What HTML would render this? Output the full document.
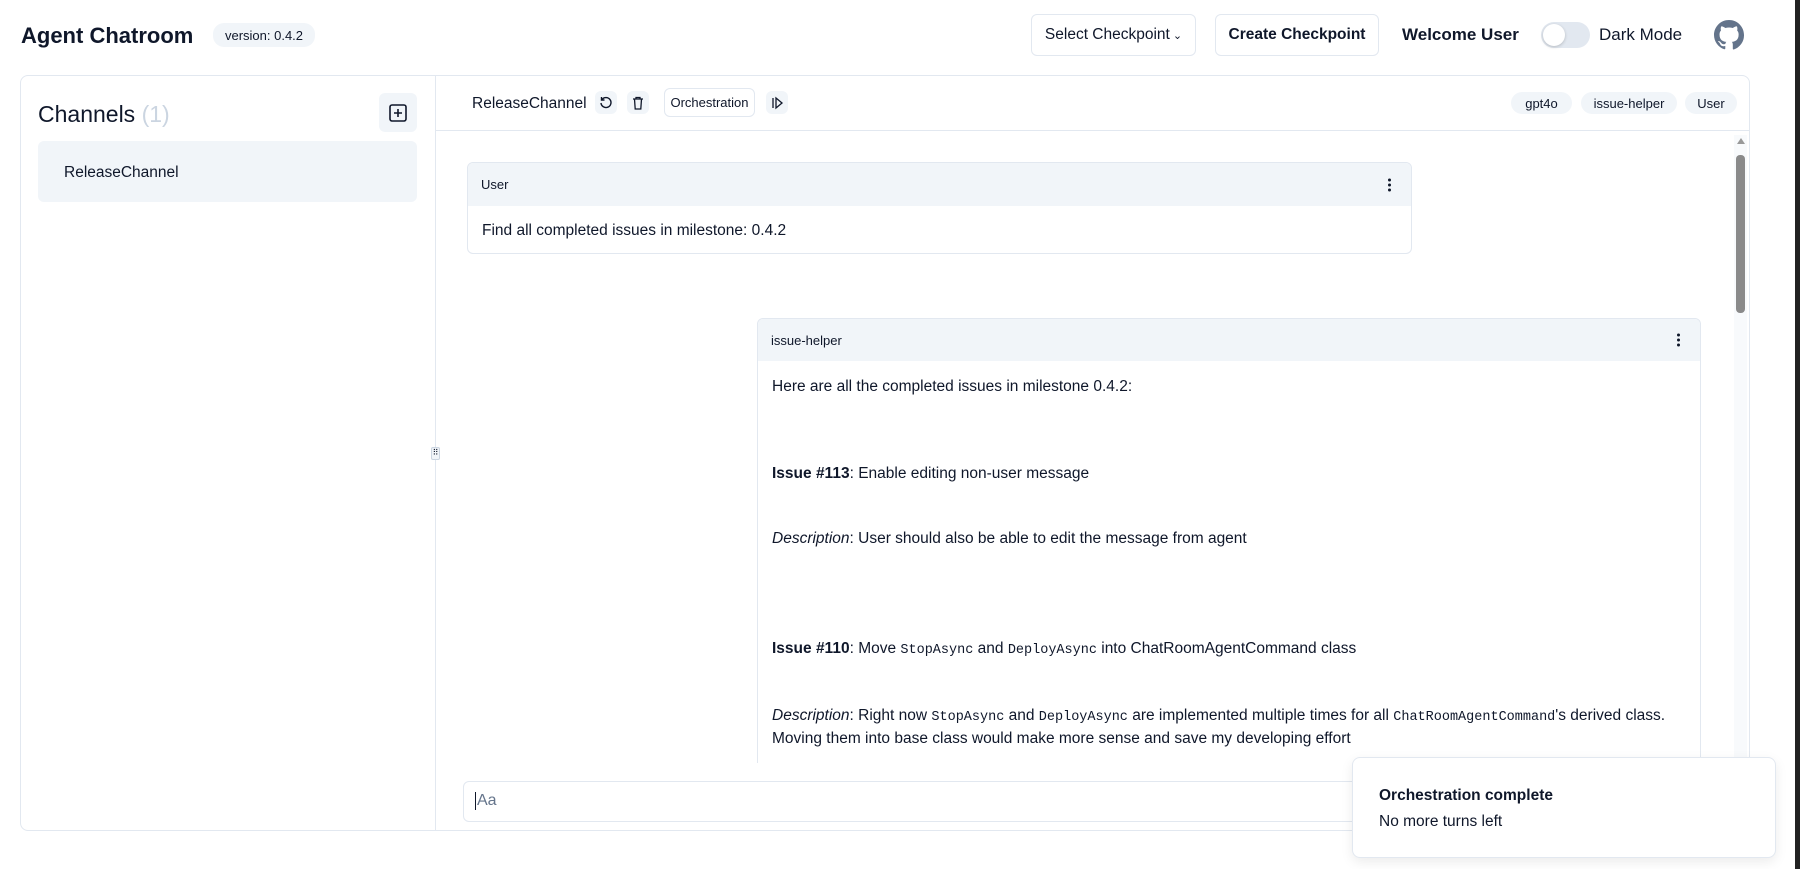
<!DOCTYPE html>
<html><head><meta charset="utf-8"><style>
*{box-sizing:border-box;margin:0;padding:0}
body{width:1800px;height:869px;background:#fff;font-family:"Liberation Sans",sans-serif;color:#0f172a;position:relative;overflow:hidden}
.a{position:absolute}
.btn{position:absolute;border:1px solid #e2e8f0;border-radius:6px;background:#fff;display:flex;align-items:center;justify-content:center;font-size:16px}
.badge{position:absolute;background:#f1f5f9;border-radius:11px;font-size:13px;display:flex;align-items:center;justify-content:center}
.ib{position:absolute;background:#f1f5f9;border-radius:6px;display:flex;align-items:center;justify-content:center}
.card{position:absolute;border:1px solid #e2e8f0;border-radius:6px;background:#fff;overflow:hidden}
.ch{background:#f1f5f9;font-size:13px;display:flex;align-items:center;padding-left:13px;position:relative}
.dots{position:absolute;right:20px;top:50%;transform:translateY(-50%);width:3px}
.dots i{display:block;width:3px;height:3px;background:#0f172a;border-radius:50%;margin:2px 0}
.t{position:absolute;left:14px;font-size:15.5px;white-space:nowrap}
code{font-family:"Liberation Mono",monospace;font-size:13.5px}
</style></head><body>
<div class="a" style="left:21px;top:23px;font-size:22px;font-weight:bold">Agent Chatroom</div>
<div class="badge" style="left:213px;top:23px;width:102px;height:24px;font-size:13px">version: 0.4.2</div>
<div class="btn" style="left:1031px;top:14px;width:165px;height:42px;font-size:15.5px">Select Checkpoint <span style="font-size:11px;margin-left:3px">&#8964;</span></div>
<div class="btn" style="left:1215px;top:14px;width:164px;height:42px;font-weight:600;font-size:15.5px">Create Checkpoint</div>
<div class="a" style="left:1402px;top:25px;font-size:17px;font-weight:bold">Welcome User</div>
<div class="a" style="left:1541px;top:22px;width:49px;height:26px;border-radius:13px;background:#e2e8f0"><div style="position:absolute;left:2px;top:2px;width:22px;height:22px;border-radius:50%;background:#fff;box-shadow:0 1px 3px rgba(0,0,0,.2)"></div></div>
<div class="a" style="left:1599px;top:25px;font-size:17px">Dark Mode</div>
<svg class="a" style="left:1714px;top:20px" width="30" height="30" viewBox="0 0 16 16"><path fill="#64748b" d="M8 0C3.58 0 0 3.58 0 8c0 3.54 2.29 6.530 5.47 7.59.4.07.55-.17.55-.38v-1.34C3.8 14.36 3.35 12.9 3.35 12.9c-.36-.92-.89-1.17-.89-1.17-.73-.5.05-.49.05-.49.8.06 1.23.83 1.230.83.71 1.22 1.87.87 2.33.66.07-.52.28-.87.51-1.07-1.78-.2-3.640-.89-3.64-3.95 0-.87.31-1.59.82-2.15-.08-.2-.36-1.02.08-2.12 0 0 .67-.21 2.2.82.64-.18 1.32-.27 2-.27.68 0 1.36.09 2 .27 1.53-1.04 2.2-.82 2.2-.82.44 1.1.16 1.92.08 2.12.51.56.82 1.27.82 2.15 0 3.07-1.87 3.75-3.65 3.95.29.25.54.73.54 1.48v2.2c0 .21.15.46.55.38A8.013 8.013 0 0016 8c0-4.42-3.58-8-8-8z"/></svg>
<div class="a" style="left:1795px;top:0;width:5px;height:869px;background:#222"></div>

<div class="a" style="left:20px;top:75px;width:1730px;height:756px;border:1px solid #e2e8f0;border-radius:8px"></div>
<div class="a" style="left:435px;top:76px;width:1px;height:754px;background:#e2e8f0"></div>
<div class="a" style="left:431px;top:447px;width:9px;height:13px;background:#f1f5f9;border:1px solid #cbd5e1;border-radius:2px;font-size:8px;line-height:10px;text-align:center">⠿</div>
<div class="a" style="left:38px;top:101px;font-size:23px">Channels <span style="color:#cbd5e1">(1)</span></div>
<div class="ib" style="left:379px;top:93px;width:38px;height:39px"><svg width="20" height="20" viewBox="0 0 20 20" fill="none" stroke="#0f172a" stroke-width="1.6"><rect x="2" y="2" width="16" height="16" rx="2"/><path d="M10 6v8M6 10h8"/></svg></div>
<div class="a" style="left:38px;top:141px;width:379px;height:61px;background:#f1f5f9;border-radius:6px"></div>
<div class="a" style="left:64px;top:164px;font-size:15.5px">ReleaseChannel</div>

<div class="a" style="left:436px;top:130px;width:1313px;height:1px;background:#e2e8f0"></div>
<div class="a" style="left:472px;top:95px;font-size:15.5px">ReleaseChannel</div>
<div class="ib" style="left:595px;top:91px;width:22px;height:23px"><svg width="14" height="14" viewBox="0 0 14 14" fill="none" stroke="#0f172a" stroke-width="1.4"><path d="M3 3.5A5 5 0 1 1 2 7"/><path d="M2.5 1v3h3"/></svg></div>
<div class="ib" style="left:627px;top:91px;width:22px;height:23px"><svg width="14" height="14" viewBox="0 0 14 14" fill="none" stroke="#0f172a" stroke-width="1.3"><path d="M2 3h10M5 3V1.5h4V3M3.5 3l.7 10h5.6l.7-10"/></svg></div>
<div class="btn" style="left:664px;top:88px;width:91px;height:29px;font-size:13px">Orchestration</div>
<div class="ib" style="left:766px;top:91px;width:22px;height:23px"><svg width="14" height="14" viewBox="0 0 14 14" fill="none" stroke="#0f172a" stroke-width="1.3"><path d="M3 2v10M6 2l6 5-6 5z"/></svg></div>
<div class="badge" style="left:1511px;top:92px;width:61px;height:22px">gpt4o</div>
<div class="badge" style="left:1581px;top:92px;width:96px;height:22px">issue-helper</div>
<div class="badge" style="left:1685px;top:92px;width:52px;height:22px">User</div>

<div class="a" style="left:1734px;top:135px;width:13px;height:628px;background:#f8fafc"></div>
<div class="a" style="left:1737px;top:138px;width:0;height:0;border-left:4px solid transparent;border-right:4px solid transparent;border-bottom:6px solid #999"></div>
<div class="a" style="left:1736px;top:155px;width:9px;height:158px;background:#8a8a8a;border-radius:4px"></div>

<div class="card" style="left:467px;top:162px;width:945px;height:92px">
<div class="ch" style="height:43px">User<div class="dots"><i></i><i></i><i></i></div></div>
<div class="t" style="top:59px">Find all completed issues in milestone: 0.4.2</div>
</div>

<div class="card" style="left:757px;top:318px;width:944px;height:470px">
<div class="ch" style="height:42px">issue-helper<div class="dots"><i></i><i></i><i></i></div></div>
<div class="t" style="top:59px">Here are all the completed issues in milestone 0.4.2:</div>
<div class="t" style="top:146px"><b>Issue #113</b>: Enable editing non-user message</div>
<div class="t" style="top:211px"><i>Description</i>: User should also be able to edit the message from agent</div>
<div class="t" style="top:321px"><b>Issue #110</b>: Move <code>StopAsync</code> and <code>DeployAsync</code> into ChatRoomAgentCommand class</div>
<div class="t" style="top:388px"><i>Description</i>: Right now <code>StopAsync</code> and <code>DeployAsync</code> are implemented multiple times for all <code>ChatRoomAgentCommand</code>'s derived class.</div>
<div class="t" style="top:411px">Moving them into base class would make more sense and save my developing effort</div>
</div>

<div class="a" style="left:436px;top:763px;width:1298px;height:67px;background:#fff"></div>
<div class="a" style="left:463px;top:781px;width:1270px;height:41px;border:1px solid #e2e8f0;border-radius:6px"></div>
<div class="a" style="left:475px;top:792px;font-size:16px;color:#64748b;border-left:1px solid #0f172a;padding-left:1px">Aa</div>

<div class="a" style="left:1352px;top:757px;width:424px;height:101px;background:#fff;border:1px solid #e2e8f0;border-radius:8px;box-shadow:0 4px 12px rgba(0,0,0,.08)"></div>
<div class="a" style="left:1379px;top:787px;font-size:15.5px;font-weight:600">Orchestration complete</div>
<div class="a" style="left:1379px;top:813px;font-size:15.5px">No more turns left</div>
</body></html>
